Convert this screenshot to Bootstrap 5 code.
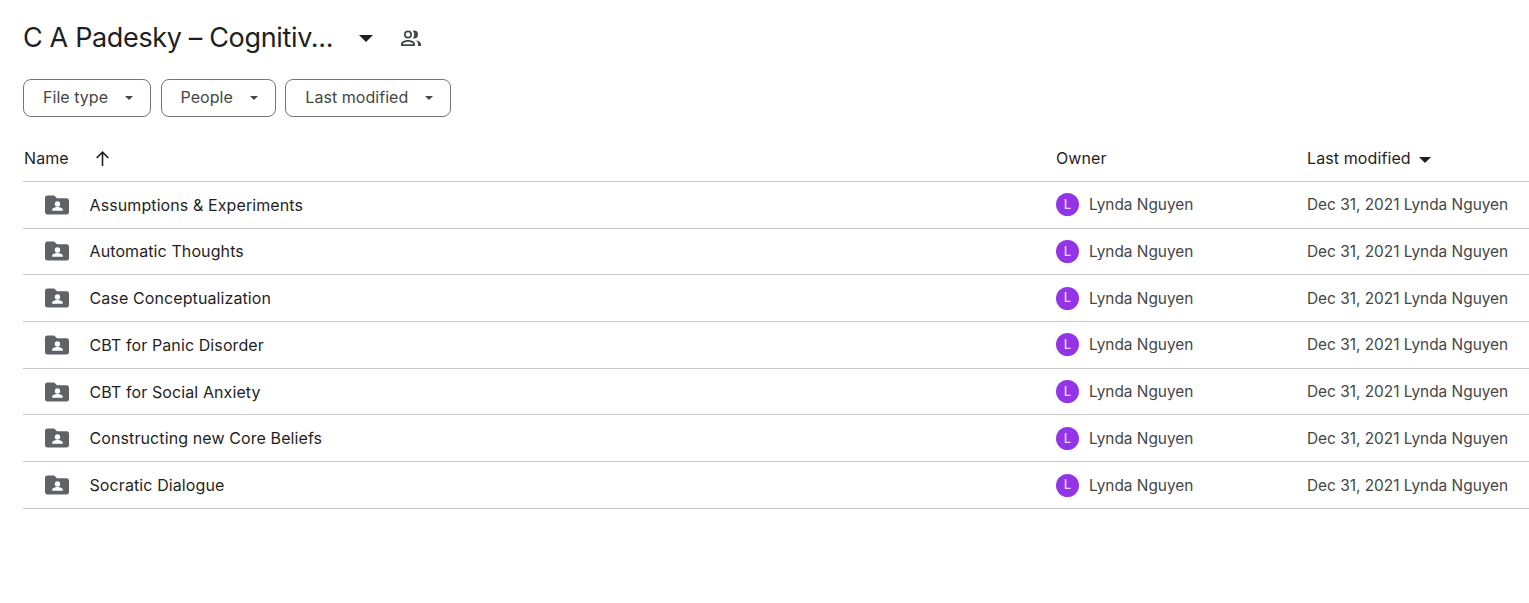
<!DOCTYPE html>
<html lang="en">
<head>
    <meta charset="UTF-8">
    <meta name="viewport" content="width=device-width, initial-scale=1.0">
    <link href="https://cdn.jsdelivr.net/npm/bootstrap@5.3.0/dist/css/bootstrap.min.css" rel="stylesheet">
    <title>C A Padesky - Google Drive</title>
    <style>
        body { font-family: Inter, Roboto, "Liberation Sans", sans-serif; color: #1f1f1f; background: #fff; overflow: hidden; }
        .drive-page { padding: 18px 0 0 23px; }
        .drive-title { font-size: 27px; font-weight: 400; letter-spacing: -.35px; line-height: 40px; margin: 0; width: 310px; white-space: nowrap; }
        .title-caret { margin-left: 26px; margin-right: 26px; }
        .filter-row { margin-top: 21px; gap: 9.5px; }
        .filter-chip { height: 38px; border: 1px solid #747775; border-radius: 8px; background: #fff; color: #444746; font-size: 16px; letter-spacing: .04px; padding: 0 17px 2px 19px; gap: 17px; }
        .filter-chip svg { margin-top: 2px; }
        .files-table { table-layout: fixed; width: 1506px; margin: 22px 0 0; border-collapse: collapse; }
        .files-table th, .files-table td { padding: 0; border-bottom: 1px solid #c7c7c7; vertical-align: middle; white-space: nowrap; }
        .files-table th { height: 42.4px; font-size: 16px; font-weight: 400; color: #1f1f1f; padding-bottom: 4px; letter-spacing: .1px; }
        .files-table td { height: 46.72px; font-size: 15.4px; color: #444746; }
        .col-name { width: 1033px; }
        .col-owner { width: 251px; }
        .name-head { padding-left: 1px !important; }
        .sort-arrow { margin-left: 21px; margin-bottom: 2px; }
        .folder-cell { padding-left: 22px !important; color: #1f1f1f !important; font-size: 16px !important; letter-spacing: .1px; }
        .folder-ico { margin-right: 20.5px; }
        .owner-dot { width: 23px; height: 23px; border-radius: 50%; background: #9334e6; color: #e8d5fa; font-size: 13px; font-weight: 500; margin-right: 10px; }
    </style>
</head>
<body>
    <div class="drive-page">
        <div class="d-flex align-items-center">
            <h1 class="drive-title">C A Padesky – Cognitiv...</h1>
            <svg class="title-caret" width="14" height="7" viewBox="0 0 14 7"><path d="M0 0h14L7 7z" fill="#1f1f1f"/></svg>
            <svg width="24" height="24" viewBox="0 0 24 24" fill="#444746"><path d="M9 12.500a4 4 0 1 0 0-8 4 4 0 0 0 0 8zm0-6.300a2.300 2.300 0 1 1 0 4.600 2.300 2.300 0 0 1 0-4.600zM9 14c-2.700 0-7 1.300-7 4v2h14v-2c0-2.700-4.300-4-7-4zm-5.300 4.300V18c.2-.9 3.300-2.300 5.300-2.300s5.100 1.400 5.300 2.300v.3H3.700zM15 12.500a4 4 0 0 0 0-8c-.5 0-.9.100-1.300.2a5.600 5.600 0 0 1 0 7.600c.4.100.8.200 1.300.2zM16.700 14.200c1.500.9 2.300 2.200 2.300 3.800v2h3v-2c0-2-3-3.400-5.300-3.800z"/></svg>
        </div>

        <div class="d-flex filter-row">
            <button type="button" class="filter-chip d-flex align-items-center">File type <svg width="8" height="4" viewBox="0 0 8 4"><path d="M0 0h8L4 4z" fill="#444746"/></svg></button>
            <button type="button" class="filter-chip d-flex align-items-center">People <svg width="8" height="4" viewBox="0 0 8 4"><path d="M0 0h8L4 4z" fill="#444746"/></svg></button>
            <button type="button" class="filter-chip d-flex align-items-center">Last modified <svg width="8" height="4" viewBox="0 0 8 4"><path d="M0 0h8L4 4z" fill="#444746"/></svg></button>
        </div>

        <table class="files-table">
            <colgroup><col class="col-name"><col class="col-owner"><col></colgroup>
            <thead>
                <tr>
                    <th class="name-head">Name <svg class="sort-arrow" width="17" height="17" viewBox="0 0 16 16"><path d="M8 15V2M2.500 7.500 8 2l5.500 5.500" fill="none" stroke="#1f1f1f" stroke-width="1.500"/></svg></th>
                    <th>Owner</th>
                    <th>Last modified <svg class="ms-1" width="12" height="6" viewBox="0 0 12 6"><path d="M0 0h12L6 6z" fill="#1f1f1f"/></svg></th>
                </tr>
            </thead>
            <tbody id="file-rows"></tbody>
        </table>
    </div>

    <script>
        const carpetas = ['Assumptions & Experiments', 'Automatic Thoughts', 'Case Conceptualization', 'CBT for Panic Disorder', 'CBT for Social Anxiety', 'Constructing new Core Beliefs', 'Socratic Dialogue'];
        const folderIco = '<svg class="folder-ico" width="24" height="20" viewBox="0 0 25 20"><path d="M2.500 0h7l3 3h10a2.500 2.500 0 0 1 2.500 2.500v12a2.500 2.500 0 0 1-2.500 2.500h-20A2.500 2.500 0 0 1 0 17.500v-15A2.500 2.500 0 0 1 2.500 0z" fill="#5f6368"/><circle cx="13" cy="9" r="2.800" fill="#fff"/><path d="M7.500 16v-1.300c0-1.800 3.600-2.700 5.500-2.700s5.500.9 5.500 2.700V16z" fill="#fff"/></svg>';
        let filas = '';
        carpetas.forEach((nombre) => {
            const safe = nombre.replace('&', '&amp;');
            filas += `<tr>
                <td class="folder-cell"><div class="d-flex align-items-center">${folderIco}${safe}</div></td>
                <td><div class="d-flex align-items-center"><span class="owner-dot d-flex align-items-center justify-content-center">L</span>Lynda Nguyen</div></td>
                <td>Dec 31, 2021 Lynda Nguyen</td>
            </tr>`;
        });
        document.getElementById('file-rows').innerHTML = filas;
    </script>
    <script src="https://cdn.jsdelivr.net/npm/bootstrap@5.3.0/dist/js/bootstrap.bundle.min.js"></script>
</body>
</html>
